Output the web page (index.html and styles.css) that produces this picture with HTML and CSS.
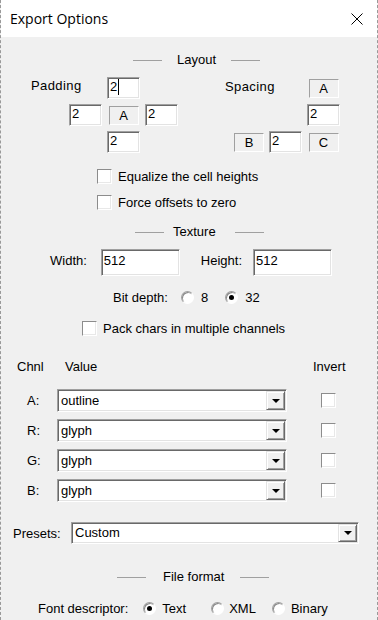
FILE: index.html
```html
<!DOCTYPE html>
<html lang="en">

<head>
    <meta charset="UTF-8">
    <title>Export Options</title>
    <link rel="stylesheet" href="styles.css">
</head>

<body>
    <div class="dialog">
        <div class="titlebar">
            <span class="title">Export Options</span>
            <svg class="close" width="12" height="12" viewBox="0 0 12 12">
                <path d="M0.5 0.5L11.5 11.5M11.5 0.5L0.5 11.5" stroke="#000" stroke-width="1" fill="none" />
            </svg>
        </div>

        <div class="content">
            <div class="sep sep-layout">
                <span class="line"></span><span class="sep-text">Layout</span><span class="line"></span>
            </div>

            <div class="pad-row">
                <div class="pad-grid">
                    <span class="grid-label">Padding</span>
                    <div class="field pg-top">2<span class="caret"></span></div>
                    <div class="field pg-left">2</div>
                    <div class="tag pg-mid">A</div>
                    <div class="field pg-right">2</div>
                    <div class="field pg-bottom">2</div>
                </div>
                <div class="spc-grid">
                    <span class="grid-label spc-label">Spacing</span>
                    <div class="tag sg-a">A</div>
                    <div class="field sg-field1">2</div>
                    <div class="tag sg-b">B</div>
                    <div class="field sg-field2">2</div>
                    <div class="tag sg-c">C</div>
                </div>
            </div>

            <div class="check-row check-1">
                <span class="checkbox"></span><span class="check-text">Equalize the cell heights</span>
            </div>
            <div class="check-row check-2">
                <span class="checkbox"></span><span class="check-text">Force offsets to zero</span>
            </div>

            <div class="sep sep-texture">
                <span class="line"></span><span class="sep-text">Texture</span><span class="line"></span>
            </div>

            <div class="size-row">
                <span class="size-label">Width:</span>
                <div class="field wide">512</div>
                <span class="size-label height-label">Height:</span>
                <div class="field wide">512</div>
            </div>

            <div class="radio-row bit-row">
                <span class="radio-label">Bit depth:</span>
                <span class="option"><span class="radio"></span>8</span>
                <span class="option opt-32"><span class="radio checked"></span>32</span>
            </div>

            <div class="check-row pack-row">
                <span class="checkbox"></span><span class="check-text">Pack chars in multiple channels</span>
            </div>

            <div class="chan-head">
                <span class="head-chnl">Chnl</span>
                <span class="head-value">Value</span>
                <span class="head-invert">Invert</span>
            </div>

            <div class="chan-grid">
                <span class="chan-label">A:</span>
                <div class="select"><span class="select-value">outline</span><span class="drop"><i class="tri"></i></span></div>
                <span class="chan-check"><span class="checkbox"></span></span>

                <span class="chan-label">R:</span>
                <div class="select"><span class="select-value">glyph</span><span class="drop"><i class="tri"></i></span></div>
                <span class="chan-check"><span class="checkbox"></span></span>

                <span class="chan-label">G:</span>
                <div class="select"><span class="select-value">glyph</span><span class="drop"><i class="tri"></i></span></div>
                <span class="chan-check"><span class="checkbox"></span></span>

                <span class="chan-label">B:</span>
                <div class="select"><span class="select-value">glyph</span><span class="drop"><i class="tri"></i></span></div>
                <span class="chan-check"><span class="checkbox"></span></span>
            </div>

            <div class="presets-row">
                <span class="presets-label">Presets:</span>
                <div class="select presets"><span class="select-value">Custom</span><span class="drop"><i class="tri"></i></span></div>
            </div>

            <div class="sep sep-file">
                <span class="line"></span><span class="sep-text">File format</span><span class="line"></span>
            </div>

            <div class="radio-row font-row">
                <span class="radio-label">Font descriptor:</span>
                <span class="option opt-text"><span class="radio checked"></span>Text</span>
                <span class="option opt-xml"><span class="radio"></span>XML</span>
                <span class="option opt-bin"><span class="radio"></span>Binary</span>
            </div>
        </div>
    </div>
</body>

</html>
```

FILE: styles.css
```css
body {
    margin: 0;
    font-family: "Liberation Sans", Arial, sans-serif;
    font-size: 13px;
    color: #000;
}

.dialog {
    width: 378px;
    height: 620px;
    box-sizing: border-box;
    border-left: 1px dashed #999;
    border-right: 1px dashed #999;
    background-color: #f0f0f0;
    overflow: hidden;
}

.titlebar {
    height: 37px;
    background-color: #fff;
    display: flex;
    align-items: center;
    justify-content: space-between;
    padding: 0 14px 0 9px;
}

.title {
    font-family: "Open Sans", "Noto Sans", sans-serif;
    font-size: 14px;
}

.content {
    display: flex;
    flex-direction: column;
    align-items: flex-start;
}

/* section headings */
.sep {
    display: flex;
    align-items: center;
    height: 16px;
    line-height: 16px;
}

.sep .line {
    width: 29px;
    height: 1px;
    background-color: #a0a0a0;
}

.sep-layout {
    margin: 15px 0 0 132px;
}

.sep-layout .sep-text {
    margin: 0 15px;
}

.sep-texture {
    margin: 14px 0 0 134px;
}

.sep-texture .sep-text {
    margin: 0 19px 0 9px;
}

.sep-file {
    margin: 25px 0 0 116px;
}

.sep-file .sep-text {
    margin: 0 16px 0 17px;
}

/* padding / spacing */
.pad-row {
    display: flex;
    margin: 9px 0 0 30px;
}

.pad-grid,
.spc-grid {
    display: grid;
    grid-template-rows: 22px 22px 22px;
    row-gap: 5px;
}

.pad-grid {
    grid-template-columns: 33px 33px 33px 33px;
    column-gap: 5px;
}

.spc-grid {
    grid-template-columns: 44px 38px 33px;
    margin-left: 47px;
}

.grid-label {
    grid-row: 1;
    grid-column: 1 / 3;
    line-height: 16px;
    padding-top: 1px;
    letter-spacing: 0.4px;
}

.spc-label {
    padding-top: 2px;
}

.field {
    width: 33px;
    height: 22px;
    box-sizing: border-box;
    background-color: #fff;
    border: 1px solid;
    border-color: #a0a0a0 #fff #fff #a0a0a0;
    box-shadow: inset 1px 1px 0 #696969, inset -1px -1px 0 #e3e3e3;
    padding: 1px 0 0 2px;
    line-height: 16px;
}

.caret {
    display: inline-block;
    width: 1px;
    height: 16px;
    background-color: #000;
    vertical-align: top;
    margin: 0 0 0 1px;
}

.tag {
    width: 30px;
    height: 19px;
    box-sizing: border-box;
    border: 1px solid;
    border-color: #a0a0a0 #fff #fff #a0a0a0;
    text-align: center;
    line-height: 17px;
    align-self: center;
    justify-self: center;
}

.pg-top { grid-row: 1; grid-column: 3; }
.pg-left { grid-row: 2; grid-column: 2; }
.pg-mid { grid-row: 2; grid-column: 3; }
.pg-right { grid-row: 2; grid-column: 4; }
.pg-bottom { grid-row: 3; grid-column: 3; }

.sg-a { grid-row: 1; grid-column: 3; }
.sg-field1 { grid-row: 2; grid-column: 3; }
.sg-b { grid-row: 3; grid-column: 1; justify-self: end; margin-right: 5px; }
.sg-field2 { grid-row: 3; grid-column: 2; }
.sg-c { grid-row: 3; grid-column: 3; }

/* checkboxes */
.check-row {
    display: flex;
    align-items: center;
    height: 15px;
}

.check-1 {
    margin: 16px 0 0 96px;
}

.check-2 {
    margin: 11px 0 0 96px;
}

.pack-row {
    margin: 16px 0 0 81px;
}

.check-text {
    margin-left: 6px;
}

.checkbox {
    display: block;
    width: 15px;
    height: 15px;
    box-sizing: border-box;
    background-color: #fff;
    border: 1px solid;
    border-color: #8c8c8c #fff #fff #8c8c8c;
    box-shadow: inset -1px -1px 0 #e8e8e8;
}

/* texture size */
.size-row {
    display: flex;
    align-items: baseline;
    margin: 9px 0 0 49px;
}

.field.wide {
    width: 79px;
    height: 27px;
    padding: 3px 0 0 2px;
    margin-left: 14px;
}

.height-label {
    margin-left: 21px;
}

.size-row .height-label + .field.wide {
    margin-left: 11px;
}

/* radios */
.radio-row {
    display: flex;
    align-items: center;
    height: 16px;
}

.bit-row {
    margin: 13px 0 0 112px;
}

.font-row {
    margin: 15px 0 0 37px;
}

.option {
    display: flex;
    align-items: center;
}

.radio {
    display: block;
    width: 13px;
    height: 13px;
    box-sizing: border-box;
    border-radius: 50%;
    background-color: #fff;
    border: 1px solid;
    border-color: #a0a0a0 #fff #fff #a0a0a0;
    box-shadow: inset 1px 1px 0 #8a8a8a;
    margin-right: 7px;
    position: relative;
}

.radio.checked::after {
    content: "";
    position: absolute;
    left: 3px;
    top: 3px;
    width: 5px;
    height: 5px;
    border-radius: 50%;
    background-color: #000;
}

.bit-row .option {
    margin-left: 13px;
}

.bit-row .opt-32 {
    margin-left: 17px;
}

.font-row .opt-text {
    margin-left: 15px;
}

.font-row .opt-text .radio {
    margin-right: 6px;
}

.font-row .opt-xml {
    margin-left: 25px;
}

.font-row .opt-xml .radio {
    margin-right: 5px;
}

.font-row .opt-bin {
    margin-left: 16px;
}

.font-row .opt-bin .radio {
    margin-right: 6px;
}

/* channels */
.chan-head,
.chan-grid {
    display: grid;
    grid-template-columns: 56px 230px 1fr;
    width: 376px;
}

.chan-head {
    margin-top: 23px;
    line-height: 16px;
}

.head-chnl {
    padding-left: 16px;
}

.head-value {
    padding-left: 8px;
}

.head-invert {
    padding-left: 26px;
}

.chan-grid {
    margin-top: 14px;
    grid-auto-rows: 23px;
    row-gap: 7px;
    align-items: center;
}

.chan-label {
    padding-left: 26px;
}

.chan-check {
    padding-left: 34px;
}

.select {
    display: flex;
    height: 23px;
    box-sizing: border-box;
    background-color: #fff;
    border: 1px solid;
    border-color: #a0a0a0 #fff #fff #a0a0a0;
    box-shadow: inset 1px 1px 0 #696969, inset -1px -1px 0 #e3e3e3;
    padding: 1px;
}

.select-value {
    flex-grow: 1;
    padding-left: 2px;
    line-height: 19px;
}

.drop {
    width: 19px;
    box-sizing: border-box;
    background-color: #f0f0f0;
    border: 1px solid;
    border-color: #e3e3e3 #696969 #696969 #e3e3e3;
    box-shadow: inset 1px 1px 0 #fff, inset -1px -1px 0 #a0a0a0;
    display: flex;
    align-items: center;
    justify-content: center;
}

.tri {
    width: 0;
    height: 0;
    border-left: 4px solid transparent;
    border-right: 4px solid transparent;
    border-top: 4px solid #000;
}

.presets-row {
    display: flex;
    align-items: center;
    margin: 20px 0 0 12px;
}

.presets-label {
    width: 58px;
}

.select.presets {
    width: 288px;
    height: 22px;
}

.select.presets .select-value {
    line-height: 18px;
}
```
